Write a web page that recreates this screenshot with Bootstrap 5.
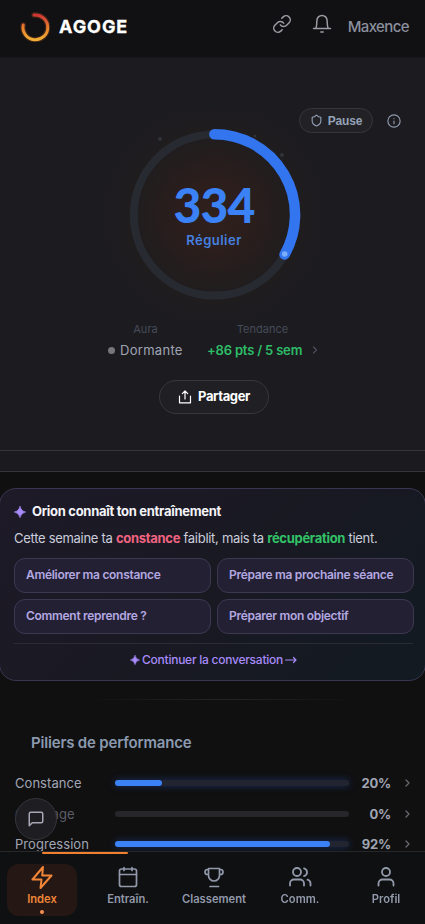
<!DOCTYPE html>
<html lang="fr" data-bs-theme="dark">
<head>
<meta charset="utf-8">
<meta name="viewport" content="width=device-width, initial-scale=1">
<title>AGOGE</title>
<link href="https://cdn.jsdelivr.net/npm/bootstrap@5.3.0/dist/css/bootstrap.min.css" rel="stylesheet">
<style>
html,body{height:924px;overflow:hidden}
body{background:#101011;font-family:Inter,"Open Sans",sans-serif;color:#a1a5b3;font-size:13px;line-height:20px}
svg{display:block;flex:none;fill:none;stroke:currentColor;stroke-width:2;stroke-linecap:round;stroke-linejoin:round}
.t{white-space:nowrap}
.topbar{height:58px;background:#111113;padding:0 16px 4px 20px;border-bottom:1px solid #18181b}
.brand{font-size:18px;font-weight:700;color:#fff;-webkit-text-stroke:.3px #fff;letter-spacing:.95px;margin-left:9px}
.tool{color:#9b9ba4}
.user{font-size:15px;letter-spacing:-.6px;color:#8b8f9d;font-weight:500}
.hero{height:393px;background:#1c1b20;border-bottom:1px solid #36353a}
.band{height:21px;background:#1b1a1e;border-bottom:1px solid #36353a}
.actions{height:25px;margin-top:50px;padding-right:24px;gap:14px;color:#8e99ab}
.pause{width:74px;height:25px;border:1px solid #37363c;background:#222126;color:#94a3b8;font:700 12px "Liberation Sans",sans-serif;letter-spacing:-.2px;gap:5px}
.gauge{width:240px;height:210px;margin-top:-24px;margin-left:94px}
.glow{background:radial-gradient(circle at 120px 106px,#30201c 0,#2b1e1c 35px,#211d1e 75px,#1c1b2000 115px)}
.ringsvg{left:0;top:0}
.score{font:900 48px/44px Lato,sans-serif;color:#3b82f6;letter-spacing:-.8px;margin:74px 0 3px 0}
.level{font-size:13px;font-weight:600;color:#4580e0;letter-spacing:.5px}
.cap{font-size:11px;line-height:14px;color:#454b58}
.val{font-size:13px;line-height:18px;margin-top:5px;gap:5px}
.chev{color:#4b4f59}
.chev2{color:#6a6b72}
.share{width:110px;height:34px;border:1px solid #38373d;background:#201f24;color:#fff;font-weight:700;font-size:13px;letter-spacing:-.4px;gap:6px;margin:21px 0 0 159px}
.orion{margin:16px -1px 0;height:193px;border:1px solid #3a3550;border-radius:17px;background:linear-gradient(135deg,#1e1a28,#191922 50%,#121a22);padding:12px 12px 0 14px}
.otitle{font-size:13px;font-weight:700;color:#f4f4f8;letter-spacing:-.29px}
.otext{font-size:13px;color:#cacddb;letter-spacing:-.29px}
.chips{display:grid;grid-template-columns:197px 197px;gap:6px;margin-top:10px}
.chip{height:35px;border:1px solid #3d3851;border-radius:11px;background:#242034;color:#b3a8e0;font-size:12px;font-weight:600;padding:0 11px 2px;letter-spacing:-.3px}
.cont{margin-top:9px;border-top:1px solid #2b2a37;color:#a78bfa;font-size:12px;font-weight:500;height:33px;letter-spacing:-.25px;gap:2px}
.fade-line{height:1px;margin:18px 65px 0 85px;background:linear-gradient(90deg,#10101100,#252528 50%,#10101100)}
.ptitle{font-size:15px;font-weight:600;color:#8b9aaf;margin:34px 0 0 31px;letter-spacing:-.18px}
.prow{height:30.7px;padding:0 11px 0 15px}
.plabel{width:100px;font-size:13px;letter-spacing:.05px}
.track{width:234px;height:6px;border-radius:3px;background:#26262b}
.track.on{box-shadow:0 0 7px #1e3f85aa;background:#22252f}
.fillbar{height:6px;border-radius:3px;background:#3b82f6}
.pct{width:42px;font-weight:700;font-size:13px;letter-spacing:-.2px;text-align:right;margin-right:13px}
.chat{left:15px;top:798px;width:42px;height:42px;background:#1d1d22;border:1px solid #35353b;color:#a7a5b6}
.tabs{left:0;top:851px;width:425px;height:73px;background:#0f1012;border-top:1px solid #26272b}
.tabgrid{margin:0 -4px 0 -1px}
.tab{width:86px;height:72px;padding-top:12px}
.tabin{width:70px;height:52px;border-radius:12px;font-size:11.2px;line-height:14px;font-weight:600;color:#9299aa;gap:3px;padding-top:1px}
.tabin.active{background:#251814;color:#f08538}
.indicator{left:42px;top:0;width:86px;height:2px;background:#f08030;border-radius:1px}
.dot{width:4px;height:4px;background:#f59050;left:40px;top:58px}
</style>
<script src="https://cdn.jsdelivr.net/npm/bootstrap@5.3.0/dist/js/bootstrap.bundle.min.js"></script>
</head>
<body>
<header class="topbar d-flex align-items-center">
  <svg width="30" height="30" viewBox="0 0 30 30"><defs><linearGradient id="lg" x1="0" y1="0" x2="0" y2="1"><stop offset="0" stop-color="#cf3434"/><stop offset=".5" stop-color="#e87d2c"/><stop offset="1" stop-color="#f0ae35"/></linearGradient></defs><path d="M14 3A12.4 12.4 0 1 1 3.2 13" stroke="#d9642b" stroke-opacity=".22" stroke-width="5.5"/><path d="M14 3A12.4 12.4 0 1 1 3.2 13" stroke="url(#lg)" stroke-width="3"/></svg>
  <span class="brand t">AGOGE</span>
  <div class="d-flex align-items-center ms-auto">
    <svg class="tool" width="20" height="20" viewBox="0 0 24 24" style="margin-right:20px;margin-top:-6px"><g stroke-width="1.8"><path d="M10 13a5 5 0 0 0 7.54.54l3-3a5 5 0 0 0-7.07-7.07l-1.72 1.71"/><path d="M14 11a5 5 0 0 0-7.54-.54l-3 3a5 5 0 0 0 7.07 7.07l1.71-1.71"/></g></svg>
    <svg class="tool" width="20" height="20" viewBox="0 0 20 20" style="margin-right:16px;margin-top:-5px"><path stroke-width="1.5" d="M1.500 14.500h17M3.800 14.300C5 12 4.700 9 4.900 6.500A5.100 5.100 0 0 1 15.100 6.500C15.300 9 15 12 16.200 14.300M8.800 18h2.400"/></svg>
    <span class="user t">Maxence</span>
  </div>
</header>
<main>
<section class="hero d-flex flex-column">
  <div class="actions d-flex align-items-center justify-content-end flex-shrink-0">
    <button class="btn p-0 pause rounded-pill d-flex align-items-center justify-content-center"><svg width="13" height="13" viewBox="0 0 24 24"><path d="M20 13c0 5-3.500 7.500-8 9-4.500-1.500-8-4-8-9V6c3 0 5.500-1.500 8-4 2.500 2.500 5 4 8 4z"/></svg>Pause</button>
    <svg width="14" height="14" viewBox="0 0 24 24"><circle cx="12" cy="12" r="10.500"/><path d="M12 16.500V12M12 8v.1"/></svg>
  </div>
  <div class="gauge glow position-relative flex-shrink-0 d-flex flex-column align-items-center">
    <svg class="ringsvg position-absolute" width="240" height="210" viewBox="94 109 240 210"><circle cx="214.400" cy="215" r="80.600" stroke="#272a31" stroke-width="8"/><path d="M214.400 134.200A80.600 80.600 0 0 1 284.600 254.500" stroke="#3275ee" stroke-width="10.600"/><circle cx="284.700" cy="254" r="2.800" fill="#79adfa" stroke="none"/><g fill="#30333a" stroke="none"><circle cx="160" cy="139" r="2"/><circle cx="282" cy="155" r="2"/><circle cx="255" cy="136" r="1.300"/></g></svg>
    <span class="score t position-relative">334</span>
    <span class="level t position-relative">Régulier</span>
  </div>
  <div class="d-flex flex-shrink-0" style="margin:3px 0 0 108px">
    <div class="d-flex flex-column align-items-center" style="width:75px"><span class="cap t">Aura</span><span class="val t d-flex align-items-center w-100" style="letter-spacing:.3px"><svg width="7" height="7" viewBox="0 0 7 7"><circle cx="3.500" cy="3.500" r="3.500" fill="#77777b" stroke="none"/></svg>Dormante</span></div>
    <div class="d-flex flex-column align-items-center" style="width:111px;margin-left:24px"><span class="cap t">Tendance</span><span class="val t d-flex align-items-center w-100" style="color:#2dbd68;font-weight:600;letter-spacing:-.18px">+86 pts / 5 sem<svg class="chev ms-auto" width="6" height="8" viewBox="0 0 6 8"><path d="M1.500 1l3 3-3 3" stroke-width="1.300"/></svg></span></div>
  </div>
  <button class="btn p-0 share rounded-pill d-flex align-items-center justify-content-center flex-shrink-0"><svg width="14" height="14" viewBox="0 0 14 14"><path stroke-width="1.200" d="M1.500 6v6.800h11V6M7 9V1M4.300 3.700L7 1l2.700 2.700"/></svg>Partager</button>
</section>
<div class="band"></div>
<section class="orion">
  <div class="d-flex align-items-center" style="gap:6px"><svg width="12" height="12" viewBox="0 0 12 12" style="margin-top:2px"><path fill="#a78bfa" stroke="#a78bfa" stroke-width=".6" d="M6 .3Q7 5 11.700 6Q7 7 6 11.700Q5 7 .3 6Q5 5 6 .3"/></svg><span class="otitle t">Orion connaît ton entraînement</span></div>
  <div class="otext t" style="margin-top:7px">Cette semaine ta <b style="color:#ef6380">constance</b> faiblit, mais ta <b style="color:#32c267">récupération</b> tient.</div>
  <div class="chips">
    <div class="chip t d-flex align-items-center">Améliorer ma constance</div><div class="chip t d-flex align-items-center">Prépare ma prochaine séance</div>
    <div class="chip t d-flex align-items-center">Comment reprendre ?</div><div class="chip t d-flex align-items-center">Préparer mon objectif</div>
  </div>
  <div class="cont t d-flex align-items-center justify-content-center"><svg width="10" height="10" viewBox="0 0 12 12"><path fill="#a78bfa" stroke="#a78bfa" stroke-width=".6" d="M6 .3Q7 5 11.700 6Q7 7 6 11.700Q5 7 .3 6Q5 5 6 .3"/></svg><span>Continuer la conversation</span><svg width="12" height="8" viewBox="0 0 12 8"><path stroke-width="1.200" d="M.6 4H11M8.500 1.500L11 4 8.500 6.500"/></svg></div>
</section>
<div class="fade-line"></div>
<h2 class="ptitle t lh-sm">Piliers de performance</h2>
<div style="margin-top:15px">
  <div class="prow d-flex align-items-center"><span class="plabel t">Constance</span><div class="track on"><div class="fillbar" style="width:20%"></div></div><span class="pct">20%</span><svg class="chev2" width="7" height="8" viewBox="0 0 7 8"><path d="M2 1l3 3-3 3" stroke-width="1.300"/></svg></div>
  <div class="prow d-flex align-items-center"><span class="plabel t" style="color:#5b5d67;letter-spacing:.1px">Calibrage</span><div class="track"></div><span class="pct">0%</span><svg class="chev2" width="7" height="8" viewBox="0 0 7 8"><path d="M2 1l3 3-3 3" stroke-width="1.300"/></svg></div>
  <div class="prow d-flex align-items-center"><span class="plabel t">Progression</span><div class="track on"><div class="fillbar" style="width:92%"></div></div><span class="pct">92%</span><svg class="chev2" width="7" height="8" viewBox="0 0 7 8"><path d="M2 1l3 3-3 3" stroke-width="1.300"/></svg></div>
</div>
</main>
<button class="btn p-0 chat rounded-circle position-fixed d-flex align-items-center justify-content-center"><svg width="18" height="18" viewBox="0 0 24 24"><path d="M21 15a2 2 0 0 1-2 2H7l-4 4V5a2 2 0 0 1 2-2h14a2 2 0 0 1 2 2z"/></svg></button>
<nav class="tabs position-fixed">
  <div class="indicator position-absolute"></div>
  <div class="tabgrid d-flex">
    <div class="tab d-flex justify-content-center"><div class="tabin active d-flex flex-column align-items-center"><svg width="24" height="24" viewBox="0 0 24 24"><path d="M13 2L2.500 14.500h9L10.500 23 21.500 10.500h-9.300z"/></svg><span>Index</span></div></div>
    <div class="tab d-flex justify-content-center"><div class="tabin d-flex flex-column align-items-center"><svg width="24" height="24" viewBox="0 0 24 24"><g stroke-width="1.700"><rect x="3.500" y="4" width="17" height="17.500" rx="2"/><path d="M8 2.500v3M16 2.500v3M3.500 9.500h17"/></g></svg><span>Entraîn.</span></div></div>
    <div class="tab d-flex justify-content-center"><div class="tabin d-flex flex-column align-items-center"><svg width="24" height="24" viewBox="0 0 24 24"><g stroke-width="1.700"><path d="M6.500 3.500h11v7a5.500 5.500 0 0 1-11 0zM6.500 9.500H5.500a2.500 2.500 0 0 1 0-5h1M17.500 9.500h1a2.500 2.500 0 0 0 0-5h-1M8 21.500h8.500"/></g></svg><span>Classement</span></div></div>
    <div class="tab d-flex justify-content-center"><div class="tabin d-flex flex-column align-items-center"><svg width="24" height="24" viewBox="0 0 24 24"><g stroke-width="1.800"><path d="M16 20.500v-2a4 4 0 0 0-4-4H6a4 4 0 0 0-4 4v2M22.500 20.500v-2a4 4 0 0 0-3-3.870M16 3.300a4 4 0 0 1 0 7.750"/><circle cx="9" cy="7" r="4"/></g></svg><span>Comm.</span></div></div>
    <div class="tab d-flex justify-content-center"><div class="tabin d-flex flex-column align-items-center"><svg width="24" height="24" viewBox="0 0 24 24"><g stroke-width="1.800"><path d="M19.500 20.500v-2a4 4 0 0 0-4-4h-7a4 4 0 0 0-4 4v2"/><circle cx="12" cy="7" r="4"/></g></svg><span>Profil</span></div></div>
  </div>
  <div class="dot rounded-circle position-absolute"></div>
</nav>
</body>
</html>
